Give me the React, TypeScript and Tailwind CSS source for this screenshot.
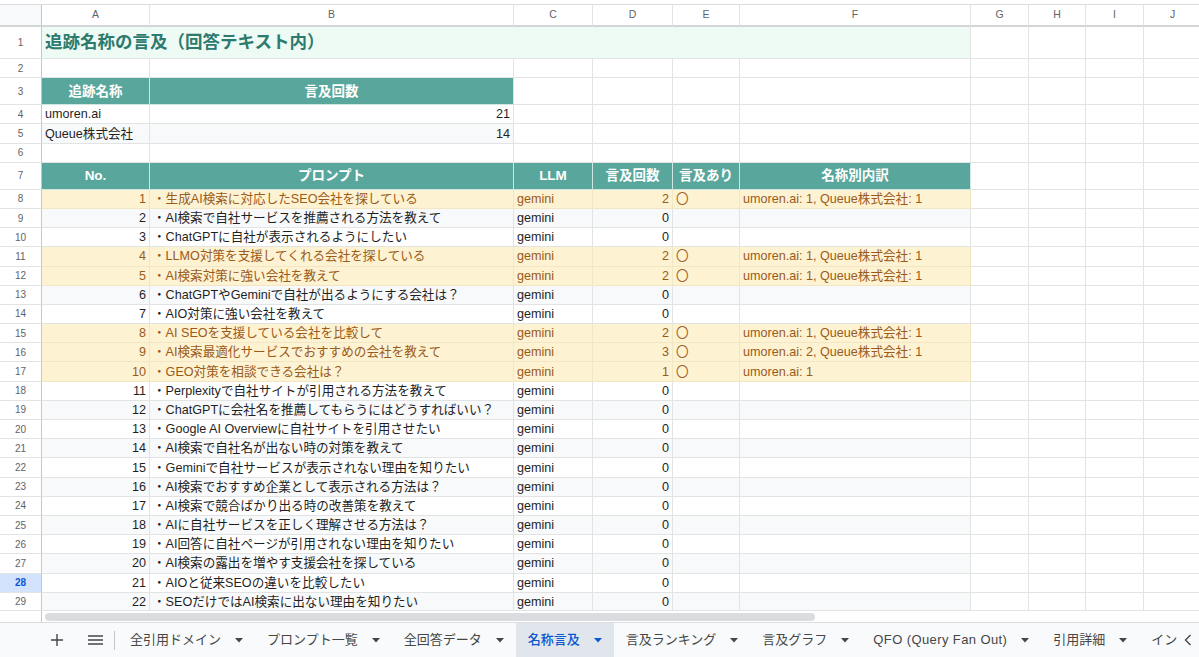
import type { ReactNode } from 'react'
import clsx from 'clsx'

// column widths A..J
const colW = [
  'w-[108px]',
  'w-[364px]',
  'w-[79px]',
  'w-[80px]',
  'w-[67px]',
  'w-[231px]',
  'w-[58px]',
  'w-[57px]',
  'w-[58px]',
  'w-[58px]',
]
const colNames = ['A', 'B', 'C', 'D', 'E', 'F', 'G', 'H', 'I', 'J']

type Prompt = {
  no: number
  text: string
  count: number
  detail?: string
}

const prompts: Prompt[] = [
  { no: 1, text: '生成AI検索に対応したSEO会社を探している', count: 2, detail: 'umoren.ai: 1, Queue株式会社: 1' },
  { no: 2, text: 'AI検索で自社サービスを推薦される方法を教えて', count: 0 },
  { no: 3, text: 'ChatGPTに自社が表示されるようにしたい', count: 0 },
  { no: 4, text: 'LLMO対策を支援してくれる会社を探している', count: 2, detail: 'umoren.ai: 1, Queue株式会社: 1' },
  { no: 5, text: 'AI検索対策に強い会社を教えて', count: 2, detail: 'umoren.ai: 1, Queue株式会社: 1' },
  { no: 6, text: 'ChatGPTやGeminiで自社が出るようにする会社は？', count: 0 },
  { no: 7, text: 'AIO対策に強い会社を教えて', count: 0 },
  { no: 8, text: 'AI SEOを支援している会社を比較して', count: 2, detail: 'umoren.ai: 1, Queue株式会社: 1' },
  { no: 9, text: 'AI検索最適化サービスでおすすめの会社を教えて', count: 3, detail: 'umoren.ai: 2, Queue株式会社: 1' },
  { no: 10, text: 'GEO対策を相談できる会社は？', count: 1, detail: 'umoren.ai: 1' },
  { no: 11, text: 'Perplexityで自社サイトが引用される方法を教えて', count: 0 },
  { no: 12, text: 'ChatGPTに会社名を推薦してもらうにはどうすればいい？', count: 0 },
  { no: 13, text: 'Google AI Overviewに自社サイトを引用させたい', count: 0 },
  { no: 14, text: 'AI検索で自社名が出ない時の対策を教えて', count: 0 },
  { no: 15, text: 'Geminiで自社サービスが表示されない理由を知りたい', count: 0 },
  { no: 16, text: 'AI検索でおすすめ企業として表示される方法は？', count: 0 },
  { no: 17, text: 'AI検索で競合ばかり出る時の改善策を教えて', count: 0 },
  { no: 18, text: 'AIに自社サービスを正しく理解させる方法は？', count: 0 },
  { no: 19, text: 'AI回答に自社ページが引用されない理由を知りたい', count: 0 },
  { no: 20, text: 'AI検索の露出を増やす支援会社を探している', count: 0 },
  { no: 21, text: 'AIOと従来SEOの違いを比較したい', count: 0 },
  { no: 22, text: 'SEOだけではAI検索に出ない理由を知りたい', count: 0 },
]

const tabs = [
  '全引用ドメイン',
  'プロンプト一覧',
  '全回答データ',
  '名称言及',
  '言及ランキング',
  '言及グラフ',
  'QFO (Query Fan Out)',
  '引用詳細',
  'インサイト',
]

function Cell({
  i,
  className,
  children,
}: {
  i: number
  className?: string
  children?: ReactNode
}) {
  return (
    <div
      className={clsx(
        'shrink-0 h-full flex items-center overflow-hidden whitespace-nowrap border-r border-b border-[#e2e3e3] px-[3px] pt-px',
        colW[i],
        className
      )}
    >
      {children}
    </div>
  )
}

function RowHead({ n, active }: { n: number; active?: boolean }) {
  return (
    <div
      className={clsx(
        'w-[42px] shrink-0 h-full flex items-center justify-center border-r border-r-[#c4c7c5] border-b border-b-[#e2e3e3] text-[10px]',
        active ? 'bg-[#d3e3fd] text-[#0b57d0] font-bold' : 'bg-white text-[#5f6368]'
      )}
    >
      {n}
    </div>
  )
}

function Row({
  n,
  h,
  active,
  children,
}: {
  n: number
  h: string
  active?: boolean
  children: ReactNode
}) {
  return (
    <div className={clsx('flex shrink-0', h)}>
      <RowHead n={n} active={active} />
      {children}
    </div>
  )
}

// empty trailing cells from column index `from` to J
function Blank({ from }: { from: number }) {
  return (
    <>
      {colW.slice(from).map((_, k) => (
        <Cell key={k} i={from + k} />
      ))}
    </>
  )
}

const headCls = 'bg-[#58a69c] text-white font-bold justify-center border-r-[#cfe7e3] border-b-[#cfe7e3] text-[13.5px]'

function Caret({ className }: { className?: string }) {
  return (
    <svg width="8" height="5" viewBox="0 0 8 5" className={className}>
      <path d="M0 0h8L4 4.5z" fill="currentColor" />
    </svg>
  )
}

export default function App() {
  return (
    <div className="w-[1199px] h-[657px] overflow-hidden flex flex-col bg-white text-[12.6px] text-[#1f1f1f] font-['Liberation_Sans','Noto_Sans_CJK_JP',sans-serif]">
      <div className="h-[4px] shrink-0 bg-white" />

      {/* column letters */}
      <div className="flex h-[23px] shrink-0 border-t border-[#dadce0]">
        <div className="w-[42px] shrink-0 bg-[#f8f9fa] border-r border-r-[#c4c7c5] border-b-2 border-b-[#d3d5d6]" />
        {colNames.map((c, i) => (
          <div
            key={c}
            className={clsx(
              'shrink-0 flex items-center justify-center text-[10.5px] text-[#5f6368] border-r border-[#e2e3e3] border-b-2 border-b-[#d3d5d6]',
              colW[i]
            )}
          >
            {c}
          </div>
        ))}
      </div>

      <div className="flex-1 overflow-hidden flex flex-col">
        <Row n={1} h="h-[32px]">
          <div className="w-[929px] shrink-0 h-full flex items-center px-[3px] bg-[#eefaf4] border-r border-b border-[#e2e3e3] text-[17.5px] font-bold text-[#2c7b6e]">
            追跡名称の言及（回答テキスト内）
          </div>
          <Blank from={6} />
        </Row>
        <Row n={2} h="h-[19.2px]">
          <Blank from={0} />
        </Row>
        <Row n={3} h="h-[27px]">
          <Cell i={0} className={headCls}>追跡名称</Cell>
          <Cell i={1} className={headCls}>言及回数</Cell>
          <Blank from={2} />
        </Row>
        <Row n={4} h="h-[19.2px]">
          <Cell i={0}>umoren.ai</Cell>
          <Cell i={1} className="justify-end">21</Cell>
          <Blank from={2} />
        </Row>
        <Row n={5} h="h-[19.2px]">
          <Cell i={0} className="bg-[#f8f9fa]">Queue株式会社</Cell>
          <Cell i={1} className="bg-[#f8f9fa] justify-end">14</Cell>
          <Blank from={2} />
        </Row>
        <Row n={6} h="h-[19.2px]">
          <Blank from={0} />
        </Row>
        <Row n={7} h="h-[27px]">
          <Cell i={0} className={headCls}>No.</Cell>
          <Cell i={1} className={headCls}>プロンプト</Cell>
          <Cell i={2} className={headCls}>LLM</Cell>
          <Cell i={3} className={headCls}>言及回数</Cell>
          <Cell i={4} className={headCls}>言及あり</Cell>
          <Cell i={5} className={headCls}>名称別内訳</Cell>
          <Blank from={6} />
        </Row>

        {prompts.map((p) => {
          const n = p.no + 7
          const hit = p.count > 0
          const tone = hit
            ? 'bg-[#fdf2d2] text-[#9a5a1a] border-[#f3e6c4]'
            : n % 2 === 1
              ? 'bg-[#f8f9fa]'
              : 'bg-white'
          return (
            <Row key={p.no} n={n} h="h-[19.2px]" active={n === 28}>
              <Cell i={0} className={clsx(tone, 'justify-end')}>{p.no}</Cell>
              <Cell i={1} className={tone}>・{p.text}</Cell>
              <Cell i={2} className={tone}>gemini</Cell>
              <Cell i={3} className={clsx(tone, 'justify-end')}>{p.count}</Cell>
              <Cell i={4} className={tone}>{hit ? '〇' : ''}</Cell>
              <Cell i={5} className={tone}>{p.detail ?? ''}</Cell>
              <Blank from={6} />
            </Row>
          )
        })}
      </div>

      {/* horizontal scrollbar */}
      <div className="h-[12px] shrink-0 flex border-t border-[#e2e3e3] bg-white">
        <div className="w-[42px] shrink-0 border-r border-[#c4c7c5]" />
        <div className="flex-1 flex items-center pl-[3px]">
          <div className="w-[770px] h-[8px] rounded-full bg-[#dadce0]" />
        </div>
      </div>

      {/* sheet tabs */}
      <div className="relative h-[35px] shrink-0 flex items-stretch bg-[#f9fafb] border-t border-[#dadce0] text-[13px] text-[#444746] overflow-hidden">
        <div className="w-[38px] shrink-0" />
        <div className="w-[38px] shrink-0 flex items-center justify-center">
          <svg width="14" height="14" viewBox="0 0 14 14">
            <path d="M7 1v12M1 7h12" stroke="#444746" strokeWidth="1.4" />
          </svg>
        </div>
        <div className="w-[38px] shrink-0 flex items-center justify-center">
          <svg width="15" height="12" viewBox="0 0 15 12">
            <path d="M0 2h15M0 6h15M0 10h15" stroke="#444746" strokeWidth="1.4" />
          </svg>
        </div>
        <div className="w-[4px] shrink-0 flex items-center">
          <div className="w-px h-[19px] bg-[#c4c7c5]" />
        </div>
        {tabs.map((t) => {
          const active = t === '名称言及'
          return (
            <div
              key={t}
              className={clsx(
                'shrink-0 flex items-center px-[12px] whitespace-nowrap',
                active && 'bg-[#e1e6ec] text-[#0b57d0] font-medium',
                t.startsWith('QFO') && 'tracking-[0.4px]'
              )}
            >
              {t}
              <Caret className="ml-[14px]" />
            </div>
          )
        })}
        <div className="absolute right-0 top-0 h-full w-[22px] flex items-center justify-center bg-[#f9fafb]">
          <svg width="8" height="12" viewBox="0 0 8 12">
            <path d="M6.5 1 1.5 6l5 5" fill="none" stroke="#444746" strokeWidth="1.4" />
          </svg>
        </div>
      </div>
    </div>
  )
}
